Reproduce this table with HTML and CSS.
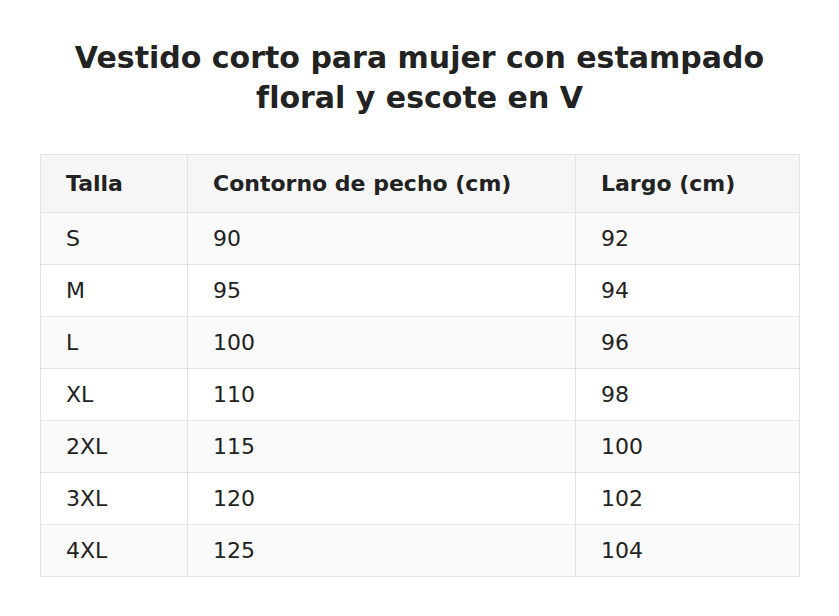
FILE: index.html
```html
<!DOCTYPE html>
<html lang="es">
<head>
<meta charset="utf-8">
<title>Tabla de tallas</title>
<link rel="stylesheet" href="styles.css">
</head>
<body>
<main class="page">
  <h1 class="title">Vestido corto para mujer con estampado floral y escote en V</h1>
  <table class="sizes">
    <colgroup>
      <col class="c1"><col class="c2"><col class="c3">
    </colgroup>
    <thead>
      <tr><th>Talla</th><th>Contorno de pecho (cm)</th><th>Largo (cm)</th></tr>
    </thead>
    <tbody>
      <tr><td>S</td><td>90</td><td>92</td></tr>
      <tr><td>M</td><td>95</td><td>94</td></tr>
      <tr><td>L</td><td>100</td><td>96</td></tr>
      <tr><td>XL</td><td>110</td><td>98</td></tr>
      <tr><td>2XL</td><td>115</td><td>100</td></tr>
      <tr><td>3XL</td><td>120</td><td>102</td></tr>
      <tr><td>4XL</td><td>125</td><td>104</td></tr>
    </tbody>
  </table>
</main>
</body>
</html>
```
FILE: styles.css
```css
html, body {
  margin: 0;
  padding: 0;
  background: #ffffff;
}
body {
  font-family: "DejaVu Sans", sans-serif;
  color: #222222;
}
.page {
  padding: 38px 40px 40px;
}
.title {
  margin: 0 0 36px;
  font-size: 30px;
  line-height: 40px;
  font-weight: bold;
  text-align: center;
  color: #222222;
}
.sizes {
  width: 759px;
  border-collapse: collapse;
  table-layout: fixed;
  font-size: 22px;
}
.c1 { width: 147px; }
.c2 { width: 388px; }
.c3 { width: 224px; }
.sizes th,
.sizes td {
  border: 1px solid #e3e3e3;
  text-align: left;
  padding: 13px 25px;
  line-height: 25px;
}
.sizes th {
  background: #f6f6f6;
  font-weight: bold;
  padding-top: 16px;
  padding-bottom: 16px;
}
.sizes tbody tr:nth-child(odd) td {
  background: #fafafa;
}
.sizes tbody tr:nth-child(even) td {
  background: #ffffff;
}
```
